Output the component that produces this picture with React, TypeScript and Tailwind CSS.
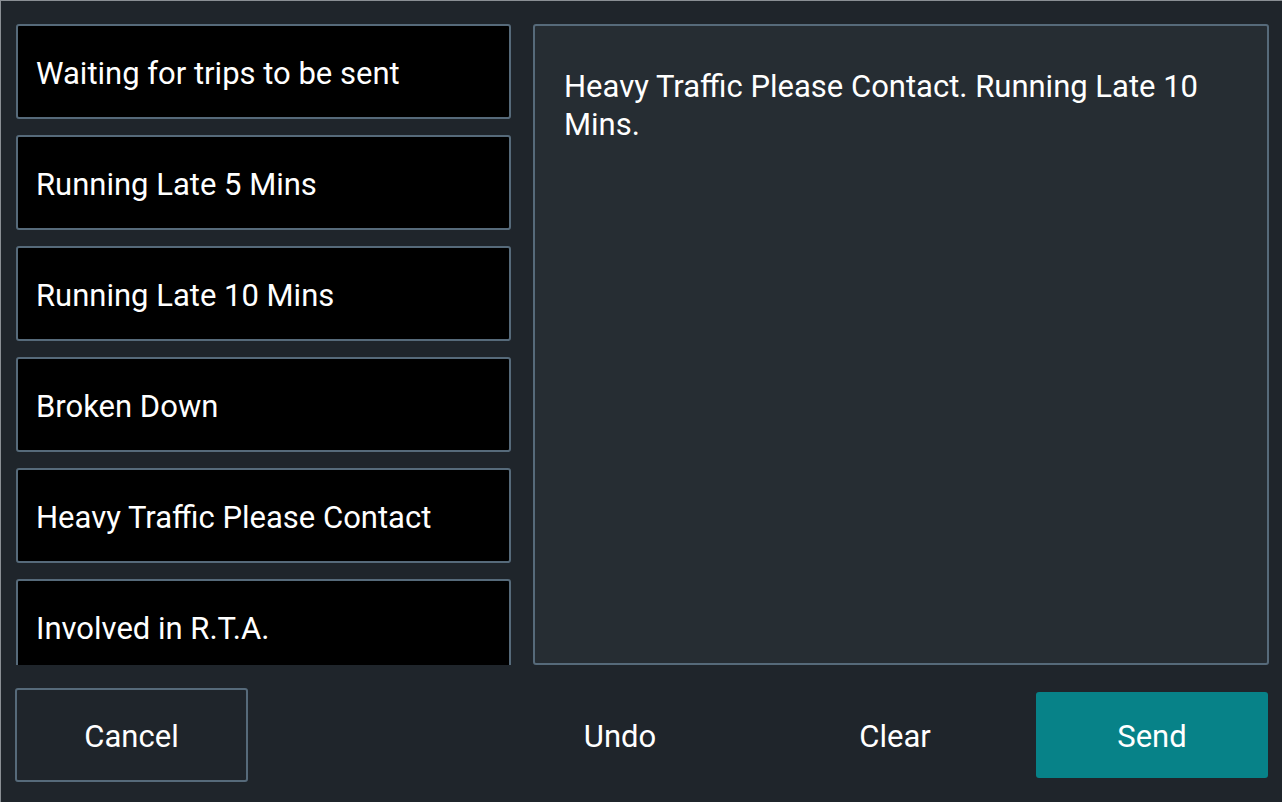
import React from 'react';

const presets = [
  'Waiting for trips to be sent',
  'Running Late 5 Mins',
  'Running Late 10 Mins',
  'Broken Down',
  'Heavy Traffic Please Contact',
  'Involved in R.T.A.',
];

export default function App() {
  return (
    <div
      className="w-[1282px] h-[802px] bg-[#1f252b] border-l border-t border-[#8a8f94] flex flex-col overflow-hidden text-white"
      style={{ fontFamily: 'Roboto, "Noto Sans", sans-serif' }}
    >
      <div className="flex pt-[23px] pl-[15px] pr-[13px] h-[665px]">
        {/* preset list */}
        <div className="w-[495px] h-[641px] overflow-hidden flex flex-col gap-[16px] shrink-0">
          {presets.map((p) => (
            <div
              key={p}
              className="h-[95px] shrink-0 bg-black border-2 border-[#566a7a] rounded-[3px] flex items-center pl-[18px] pt-[4px] text-[31px] leading-none"
            >
              {p}
            </div>
          ))}
        </div>

        {/* message box */}
        <div className="ml-[22px] flex-1 h-[641px] bg-[#262d33] border-2 border-[#566a7a] rounded-[3px] pl-[29px] pr-[40px] pt-[42px] text-[31px] leading-[38px]">
          Heavy Traffic Please Contact. Running Late 10 Mins.
        </div>
      </div>

      <div className="flex items-center pl-[14px] pr-[13px] mt-[22px]">
        <button className="w-[233px] h-[94px] border-2 border-[#566a7a] rounded-[3px] text-[31px] pt-[4px]">
          Cancel
        </button>
        <button className="ml-[256px] w-[232px] h-[86px] text-[31px] pt-[4px]">Undo</button>
        <button className="ml-[43px] w-[232px] h-[86px] text-[31px] pt-[4px]">Clear</button>
        <button className="ml-[25px] w-[232px] h-[86px] bg-[#078288] rounded-[3px] text-[31px] pt-[4px]">
          Send
        </button>
      </div>
    </div>
  );
}
